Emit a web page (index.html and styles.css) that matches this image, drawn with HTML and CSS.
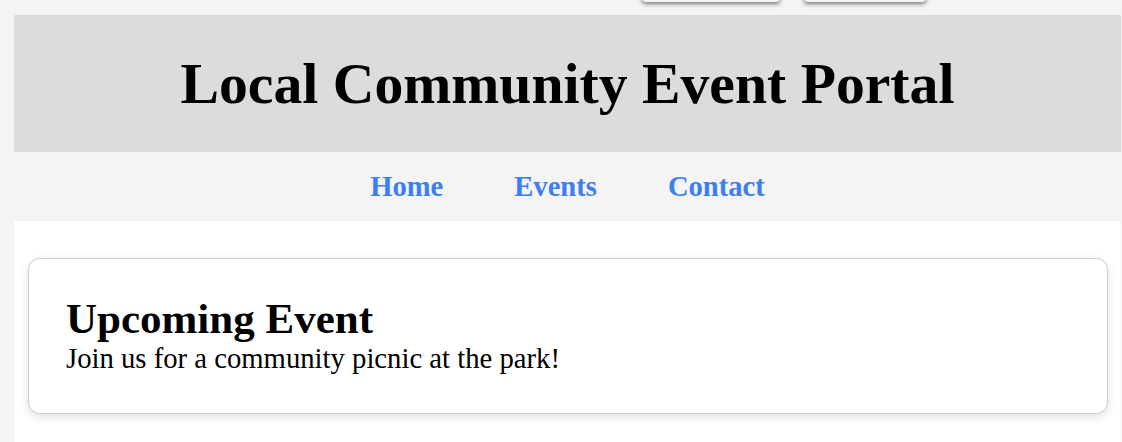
FILE: index.html
```html
<!DOCTYPE html>
<html>
<head>
<meta charset="utf-8">
<link rel="stylesheet" href="styles.css">
</head>
<body>
<div class="top-buttons">
  <button class="ghost-btn ghost-a"></button>
  <button class="ghost-btn ghost-b"></button>
</div>
<div class="page">
  <header class="site-header">
    <h1 class="title">Local Community Event Portal</h1>
  </header>
  <nav class="site-nav">
    <a class="nav-link" href="#">Home</a>
    <a class="nav-link" href="#">Events</a>
    <a class="nav-link" href="#">Contact</a>
  </nav>
  <main class="content">
    <section class="card">
      <h2 class="card-title">Upcoming Event</h2>
      <p class="card-text">Join us for a community picnic at the park!</p>
    </section>
  </main>
</div>
</body>
</html>
```
FILE: styles.css
```css
html, body {
  margin: 0;
  padding: 0;
}
body {
  background: #f4f4f4;
  font-family: "Liberation Serif", "Times New Roman", serif;
  color: #000;
  height: 442px;
  overflow: hidden;
  position: relative;
}
.top-buttons {
  position: absolute;
  top: -30px;
  left: 642px;
  display: flex;
  gap: 24px;
}
.ghost-btn {
  height: 32px;
  border: none;
  border-radius: 4px;
  background: #f4f4f4;
  box-shadow: 0 2px 4px rgba(0,0,0,0.5);
  padding: 0;
}
.ghost-a { width: 138px; }
.ghost-b { width: 122px; }
.page {
  margin: 15px 1px 0 14px;
}
.site-header {
  background: #dcdcdc;
  height: 137px;
  display: flex;
  align-items: center;
  justify-content: center;
}
.title {
  margin: 0;
  font-size: 57.7px;
  font-weight: bold;
}
.site-nav {
  background: #f4f4f4;
  height: 69px;
  display: flex;
  align-items: center;
  justify-content: center;
  gap: 71px;
}
.nav-link {
  color: #3b7ff5;
  text-decoration: none;
  font-weight: bold;
  font-size: 28.6px;
}
.content {
  background: #fff;
  padding: 37px 13px 40px 14px;
}
.card {
  border: 1px solid #cfcfcf;
  border-radius: 12px;
  box-shadow: 0 3px 10px rgba(0,0,0,0.12);
  padding: 36px 37px 38px 37px;
  background: #fff;
}
.card-title {
  margin: 0;
  font-size: 43px;
  line-height: 1.1;
}
.card-text {
  margin: 0;
  font-size: 28.7px;
  line-height: 1.15;
}
```
